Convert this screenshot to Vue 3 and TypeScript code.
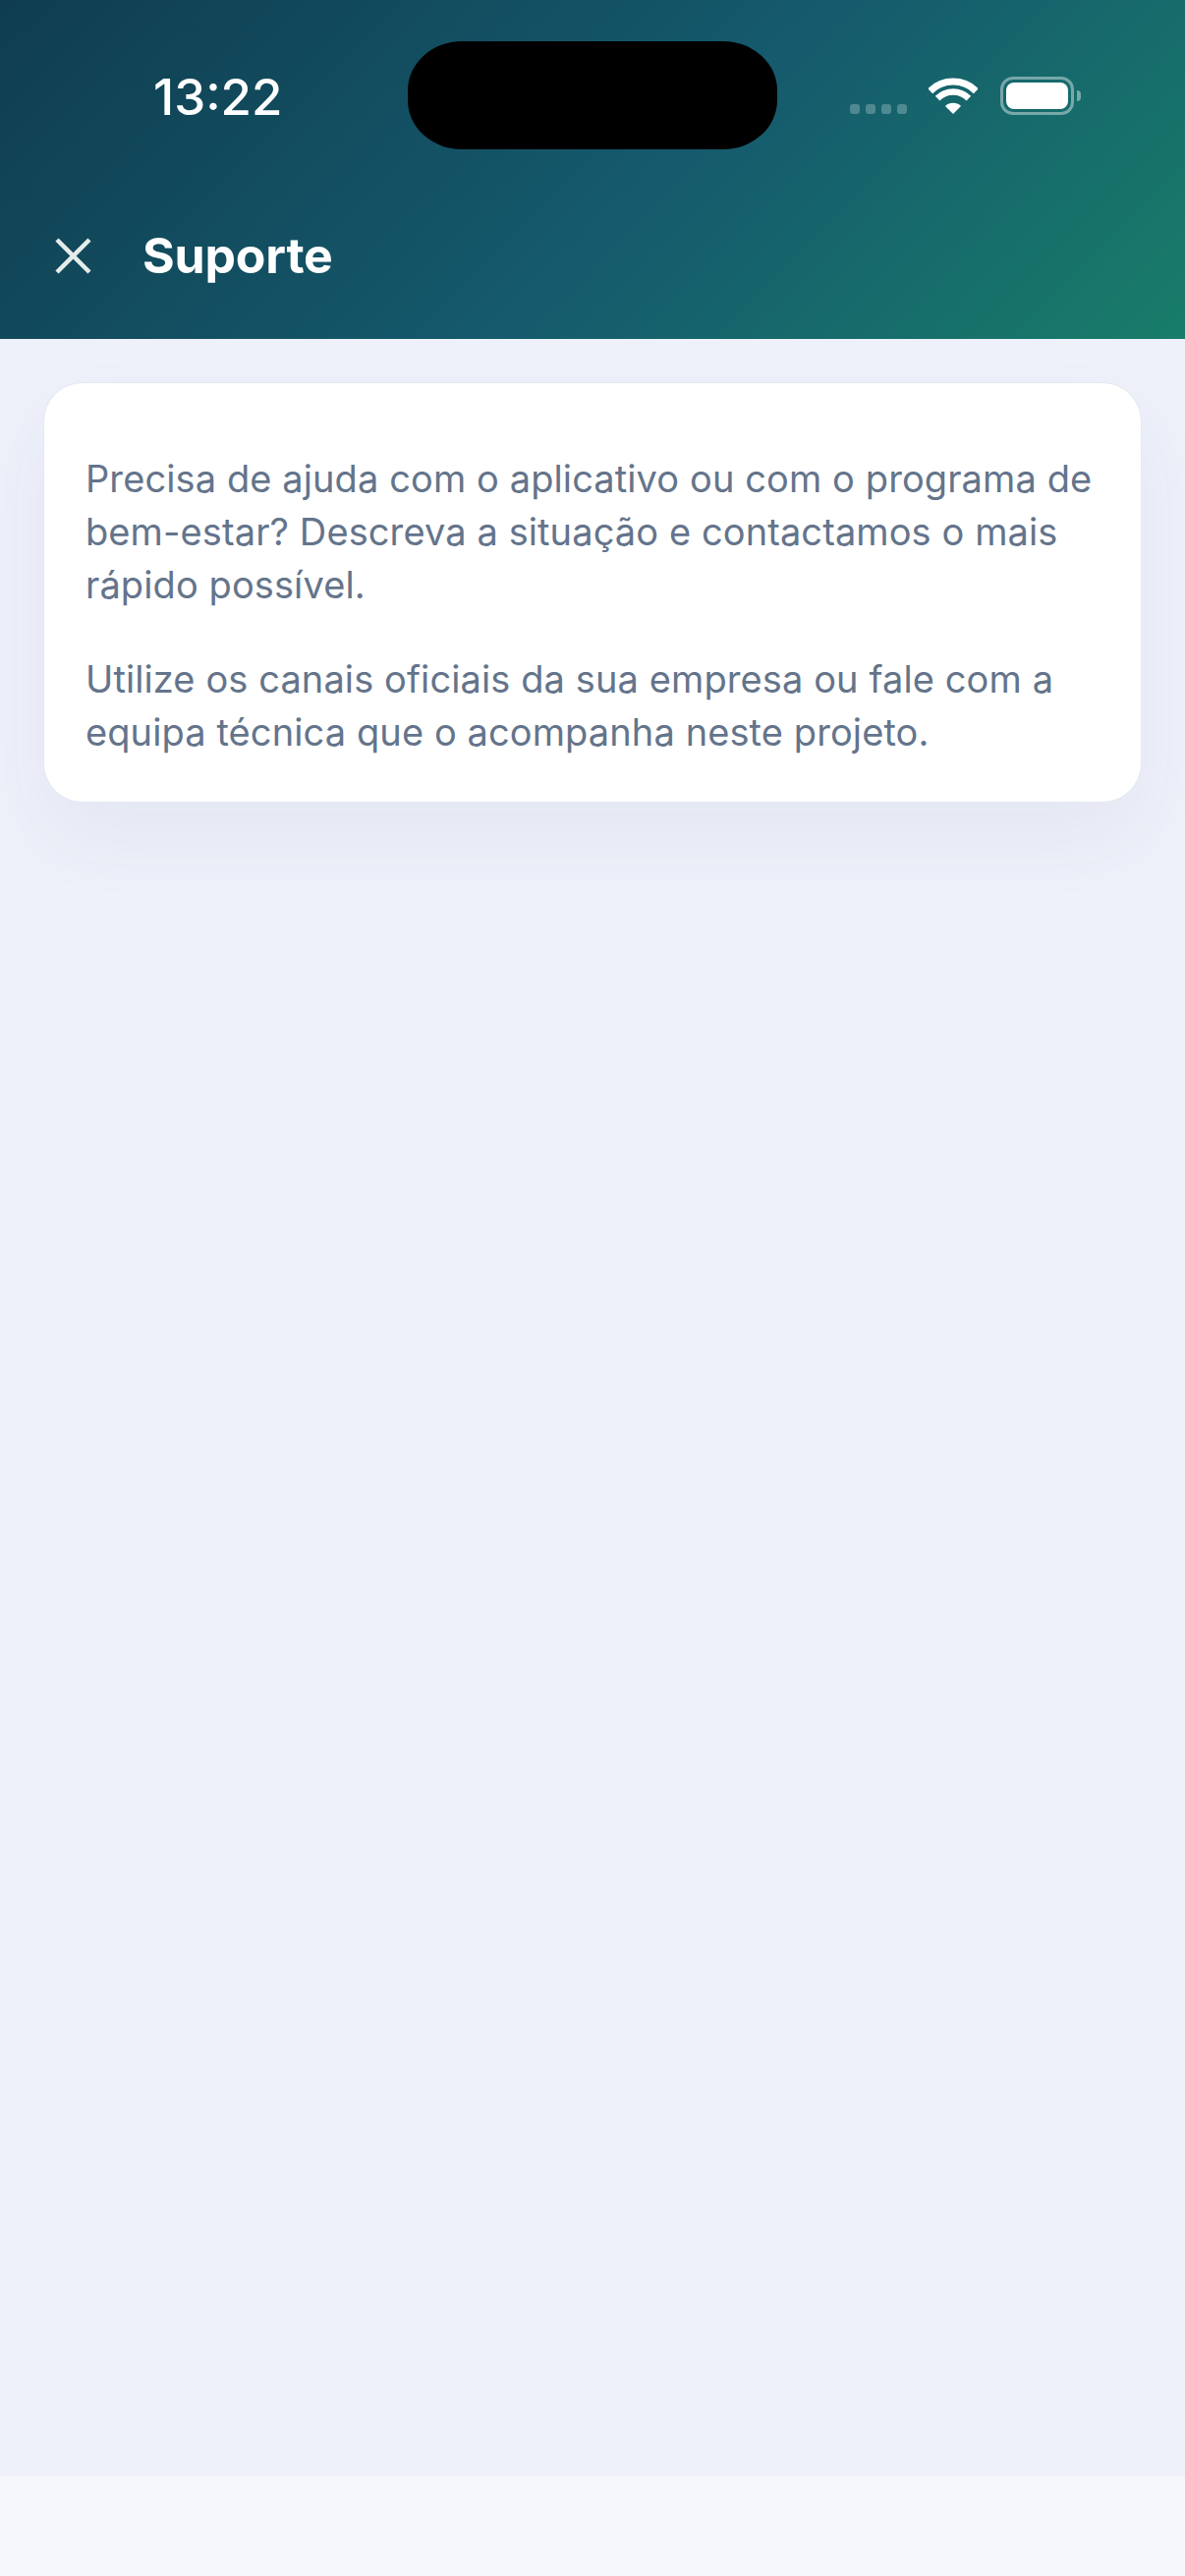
<script setup lang="ts">
const paragraphs: string[] = [
  'Precisa de ajuda com o aplicativo ou com o programa de bem-estar? Descreva a situação e contactamos o mais rápido possível.',
  'Utilize os canais oficiais da sua empresa ou fale com a equipa técnica que o acompanha neste projeto.',
]
</script>

<template>
  <div class="screen">
    <header class="header">
      <div class="status">
        <span class="time">13:22</span>
        <div class="island"></div>
        <div class="indicators">
          <div class="dots"><i></i><i></i><i></i><i></i></div>
          <svg class="wifi" width="50" height="37" viewBox="0 0 50 37" fill="none">
            <path d="M1.7 13.7A33 33 0 0 1 48.3 13.7" stroke="#fff" stroke-width="7" />
            <path d="M9.1 21.1A22.5 22.5 0 0 1 40.9 21.1" stroke="#fff" stroke-width="6.5" />
            <path d="M25 37L17 29A11.3 11.3 0 0 1 33 29Z" fill="#fff" />
          </svg>
          <div class="battery">
            <div class="shell"><div class="level"></div></div>
            <div class="nub"></div>
          </div>
        </div>
      </div>
      <div class="titlebar">
        <svg class="close" width="37" height="37" viewBox="0 0 37 37" fill="none">
          <path d="M2 2L35 35M35 2L2 35" stroke="#e6ecea" stroke-width="4.5" />
        </svg>
        <h1 class="title">Suporte</h1>
      </div>
    </header>
    <main class="content">
      <section class="card">
        <p v-for="text in paragraphs" :key="text" class="text">{{ text }}</p>
      </section>
    </main>
    <footer class="footer"></footer>
  </div>
</template>

<style scoped>
.screen {
  width: 1206px;
  height: 2622px;
  display: flex;
  flex-direction: column;
  background: #eef1fa;
  font-family: Inter, "Noto Sans", sans-serif;
  overflow: hidden;
}
.header {
  height: 345px;
  flex: none;
  box-sizing: border-box;
  background: linear-gradient(135deg, #0f3d4f 0%, #155a6d 55%, #187d69 100%);
  color: #fff;
}
.status {
  height: 152px;
  box-sizing: border-box;
  padding: 42px 0 0 156px;
  display: flex;
  align-items: flex-start;
}
.time {
  width: 259px;
  margin-top: 27px;
  font-size: 51px;
  line-height: 60px;
  font-weight: 500;
}
.island {
  width: 376px;
  height: 110px;
  border-radius: 55px / 50px;
  background: #000;
}
.indicators {
  display: flex;
  align-items: flex-end;
  margin-left: 74px;
  margin-top: 36px;
  height: 39px;
}
.dots {
  display: flex;
  gap: 6px;
  margin-bottom: 1px;
}
.dots i {
  display: block;
  width: 10px;
  height: 10px;
  border-radius: 3px;
  background: rgba(255, 255, 255, 0.25);
}
.wifi {
  margin-left: 22px;
  margin-bottom: 1px;
}
.battery {
  display: flex;
  align-items: center;
  margin-left: 23px;
  height: 39px;
}
.shell {
  width: 75px;
  height: 39px;
  box-sizing: border-box;
  padding: 3px;
  border: 3px solid rgba(255, 255, 255, 0.42);
  border-radius: 13px;
}
.level {
  height: 100%;
  border-radius: 8px;
  background: #fff;
}
.nub {
  width: 4px;
  height: 11px;
  margin-left: 3px;
  border-radius: 0 6px 6px 0;
  background: rgba(255, 255, 255, 0.42);
}
.titlebar {
  display: flex;
  align-items: center;
  padding: 79px 0 0 56px;
}
.close {
  flex: none;
}
.title {
  margin: 0 0 0 52px;
  font-size: 50px;
  line-height: 58px;
  font-weight: 700;
  letter-spacing: -0.2px;
}
.content {
  flex: 1;
  padding: 44px 44px 0;
}
.card {
  box-sizing: border-box;
  height: 428px;
  padding: 70px 42px 0;
  background: #fff;
  border: 1px solid #e4e8f1;
  border-radius: 40px;
  box-shadow: 0 36px 80px rgba(60, 80, 120, 0.055);
}
.text {
  margin: 0 0 42px;
  font-size: 38px;
  line-height: 54px;
  letter-spacing: 0.1px;
  color: #64748b;
}
.footer {
  height: 102px;
  flex: none;
  background: #f6f7fb;
}
</style>
